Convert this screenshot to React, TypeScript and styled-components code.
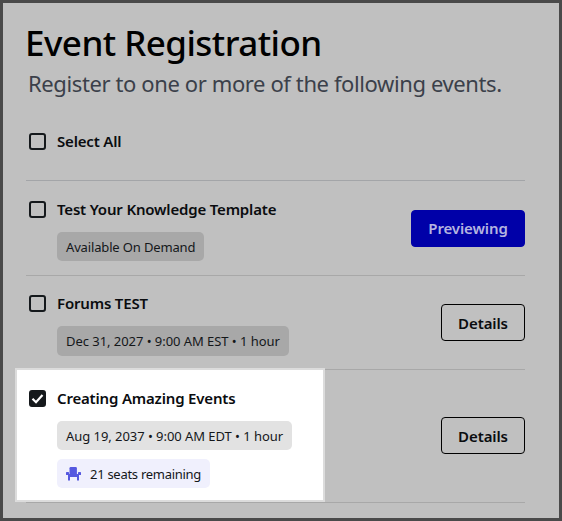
import React from "react";
import styled, { createGlobalStyle } from "styled-components";

const Global = createGlobalStyle`
  html, body { margin: 0; padding: 0; background: #c0c0c0; }
  body { font-family: "Noto Sans", "Open Sans", sans-serif; }
`;

const Frame = styled.div`
  box-sizing: border-box;
  width: 562px;
  height: 521px;
  border: 3px solid #4a4a4a;
  background: #c0c0c0;
  padding: 17px 34px 0 23px;
  overflow: hidden;
`;

const Title = styled.h1`
  margin: 0 0 0 -1px;
  font-size: 35px;
  line-height: 46px;
  font-weight: 500;
  color: #000;
  letter-spacing: -0.55px;
`;

const Subtitle = styled.p`
  margin: 2px 0 0 2px;
  font-size: 22px;
  line-height: 30px;
  font-weight: 400;
  color: #3b404a;
  letter-spacing: -0.39px;
`;

const SelectAllRow = styled.div`
  box-sizing: border-box;
  display: flex;
  align-items: center;
  gap: 11px;
  height: 83px;
  padding: 4px 3px 0;
  border-bottom: 1px solid #a3a5a8;
`;

const Row = styled.div<{ $height: number }>`
  position: relative;
  box-sizing: border-box;
  height: ${(p) => p.$height}px;
  display: flex;
  justify-content: space-between;
  align-items: center;
  border-bottom: 1px solid #a8a8a8;
`;

const Spotlight = styled.div`
  position: absolute;
  left: -11px;
  top: -2px;
  width: 306px;
  height: 130px;
  background: #fff;
  border: 2px solid #dcdcdc;
`;

const Info = styled.div<{ $top?: number }>`
  position: relative;
  align-self: flex-start;
  display: flex;
  flex-direction: column;
  align-items: flex-start;
  gap: 11px;
  padding: ${(p) => p.$top ?? 16}px 0 0 3px;
`;

const TitleLine = styled.div`
  display: flex;
  align-items: center;
  gap: 11px;
  height: 24px;
`;

const Box = styled.span<{ $checked?: boolean }>`
  box-sizing: border-box;
  width: 17px;
  height: 17px;
  flex: none;
  display: flex;
  align-items: center;
  justify-content: center;
  border-radius: 3px;
  border: 2px solid #15191c;
  background: ${(p) => (p.$checked ? "#15191c" : "transparent")};
`;

const Label = styled.span`
  font-size: 15px;
  line-height: 20px;
  font-weight: 600;
  color: #0a0c0f;
  letter-spacing: -0.18px;
`;

const Chips = styled.div`
  display: flex;
  flex-direction: column;
  align-items: flex-start;
  gap: 9px;
  margin-left: 28px;
`;

const Chip = styled.span<{ $tone: "dim" | "light" | "seat"; $tight?: number; $tall?: boolean }>`
  display: inline-flex;
  align-items: center;
  gap: 9px;
  height: ${(p) => (p.$tall ? 30 : 29)}px;
  padding: 0 9px;
  border-radius: 5px;
  font-size: 13px;
  letter-spacing: ${(p) => p.$tight ?? -0.05}px;
  color: #14171a;
  background: ${(p) =>
    p.$tone === "dim" ? "#a8a8a8" : p.$tone === "light" ? "#e2e2e2" : "#f0f0fd"};
`;

const Action = styled.button<{ $primary?: boolean; $lift?: boolean }>`
  position: relative;
  box-sizing: border-box;
  width: ${(p) => (p.$primary ? 114 : 84)}px;
  height: 37px;
  padding: 0;
  margin-bottom: ${(p) => (p.$lift ? 1 : 0)}px;
  border-radius: 4px;
  font-family: inherit;
  font-size: 15px;
  font-weight: 600;
  letter-spacing: -0.1px;
  border: 1px solid ${(p) => (p.$primary ? "#0000a8" : "#000")};
  background: ${(p) => (p.$primary ? "#0000a8" : "transparent")};
  color: ${(p) => (p.$primary ? "#b4b4e0" : "#0a0c0f")};
`;

const Check = () => (
  <svg width="13" height="13" viewBox="0 0 13 13" fill="none">
    <path d="M1.5 6.8 L5 10.2 L11.5 3" stroke="#fff" strokeWidth="2.2" />
  </svg>
);

const Seat = () => (
  <svg width="15" height="14" viewBox="0 0 15 14" fill="#5558e0">
    <path d="M3.5 1.2 a1.2 1.2 0 0 1 1.2-1.2 h5 a1.2 1.2 0 0 1 1.2 1.2 V7 H3.5 Z" />
    <rect x="0" y="5" width="3" height="3" rx="0.6" />
    <rect x="12" y="5" width="3" height="3" rx="0.6" />
    <rect x="2" y="7" width="11" height="3" />
    <rect x="2" y="10" width="2" height="3.5" />
    <rect x="11" y="10" width="2" height="3.5" />
  </svg>
);

export default function App() {
  return (
    <Frame>
      <Global />
      <Title>Event Registration</Title>
      <Subtitle>Register to one or more of the following events.</Subtitle>
      <SelectAllRow>
        <Box />
        <Label>Select All</Label>
      </SelectAllRow>
      <Row $height={95}>
        <Info>
          <TitleLine>
            <Box />
            <Label>Test Your Knowledge Template</Label>
          </TitleLine>
          <Chips>
            <Chip $tone="dim" $tight={-0.15}>Available On Demand</Chip>
          </Chips>
        </Info>
        <Action $primary>Previewing</Action>
      </Row>
      <Row $height={94}>
        <Info $top={15}>
          <TitleLine>
            <Box />
            <Label>Forums TEST</Label>
          </TitleLine>
          <Chips>
            <Chip $tone="dim" $tall>Dec 31, 2027 • 9:00 AM EST • 1 hour</Chip>
          </Chips>
        </Info>
        <Action>Details</Action>
      </Row>
      <Row $height={133}>
        <Spotlight />
        <Info>
          <TitleLine>
            <Box $checked>
              <Check />
            </Box>
            <Label>Creating Amazing Events</Label>
          </TitleLine>
          <Chips>
            <Chip $tone="light">Aug 19, 2037 • 9:00 AM EDT • 1 hour</Chip>
            <Chip $tone="seat" $tight={-0.28}>
              <Seat />
              21 seats remaining
            </Chip>
          </Chips>
        </Info>
        <Action $lift>Details</Action>
      </Row>
    </Frame>
  );
}
